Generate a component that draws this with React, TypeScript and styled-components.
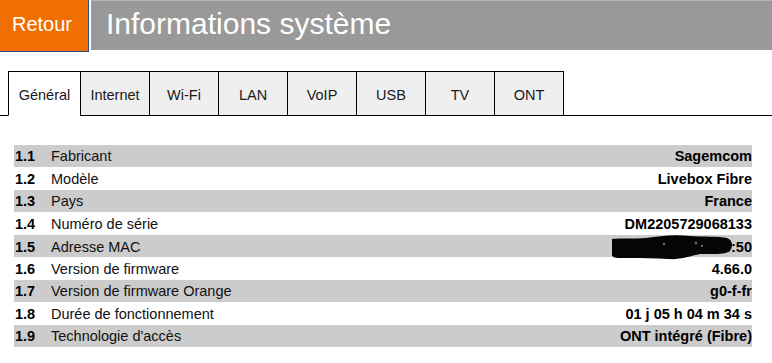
import React from "react";
import styled, { createGlobalStyle } from "styled-components";

const Global = createGlobalStyle`
  html, body { margin: 0; padding: 0; background: #ffffff; }
  body { font-family: "Liberation Sans", Arial, sans-serif; color: #000; }
`;

const Page = styled.div`
  width: 772px;
  height: 363px;
  overflow: hidden;
  display: flex;
  flex-direction: column;
`;

const Header = styled.header`
  display: flex;
  align-items: flex-start;
  gap: 2px;
  height: 52px;
`;

const BackButton = styled.button`
  width: 89px;
  height: 52px;
  box-sizing: border-box;
  background: #f16e00;
  border: none;
  border-right: 1px solid #2e4f86;
  border-bottom: 1px solid #2e4f86;
  color: #ffffff;
  font-family: "Liberation Sans", Arial, sans-serif;
  font-size: 20px;
  text-align: left;
  padding: 0 0 3px 12px;
  margin: 0;
  cursor: pointer;
`;

const TitleBar = styled.div`
  flex: 1;
  height: 50px;
  box-sizing: border-box;
  background: #999999;
  border-top: 1px solid #b4b4b4;
  display: flex;
  align-items: center;
  padding: 0 0 3px 15px;
`;

const Title = styled.h1`
  margin: 0;
  font-weight: normal;
  font-size: 30px;
  color: #ffffff;
  font-family: "Liberation Sans", Arial, sans-serif;
`;

const TabBar = styled.nav`
  display: flex;
  margin-top: 19px;
  height: 45px;
`;

const TabSpacer = styled.div<{ $grow?: boolean }>`
  width: 8px;
  flex: ${(p) => (p.$grow ? "1" : "none")};
  border-bottom: 1px solid #000;
`;

const Tab = styled.div<{ $active?: boolean; $last?: boolean; $w: number }>`
  box-sizing: border-box;
  width: ${(p) => p.$w}px;
  height: 45px;
  border-top: 1px solid #000;
  border-left: 1px solid #000;
  border-right: ${(p) => (p.$last ? "1px solid #000" : "none")};
  border-bottom: ${(p) => (p.$active ? "1px solid transparent" : "1px solid #000")};
  background: ${(p) => (p.$active ? "#ffffff" : "#efefef")};
  display: flex;
  align-items: center;
  justify-content: center;
  font-size: 14.5px;
  color: #1a1a1a;
  padding-top: 3px;
`;

const Table = styled.div`
  margin: 29px 20px 0 14px;
  display: flex;
  flex-direction: column;
`;

const Row = styled.div<{ $shaded: boolean; $h: number }>`
  display: grid;
  grid-template-columns: 37px 1fr auto;
  align-items: center;
  height: ${(p) => p.$h}px;
  background: ${(p) => (p.$shaded ? "#cccccc" : "transparent")};
  font-size: 14.5px;
`;

const Num = styled.span`
  font-weight: bold;
  padding-left: 1px;
`;

const Label = styled.span`
  color: #111;
`;

const Value = styled.span`
  font-weight: bold;
  text-align: right;
  display: flex;
  align-items: center;
  justify-content: flex-end;
`;

const Blob = styled.svg`
  display: block;
  margin-right: -9px;
  margin-top: 2px;
  overflow: visible;
`;

const Redacted = () => (
  <Blob width="128" height="22" viewBox="0 0 128 22">
    <path
      d="M0 2 C10 1 22 2 34 1 C48 -1 62 -3 78 -1 C92 0 106 -1 115 1 C121 3 121 10 118 14 C113 18 100 17 88 17 C78 19 68 23 56 22 C44 21 30 21 18 21 C8 21 1 22 0 18 Z"
      fill="#050505"
    />
    <circle cx="52" cy="7" r="1.2" fill="#777" />
    <circle cx="84" cy="6" r="1.4" fill="#666" />
    <circle cx="90" cy="9" r="1" fill="#888" />
  </Blob>
);

const tabs = ["Général", "Internet", "Wi-Fi", "LAN", "VoIP", "USB", "TV", "ONT"];

const rows: { n: string; label: string; value: React.ReactNode }[] = [
  { n: "1.1", label: "Fabricant", value: "Sagemcom" },
  { n: "1.2", label: "Modèle", value: "Livebox Fibre" },
  { n: "1.3", label: "Pays", value: "France" },
  { n: "1.4", label: "Numéro de série", value: "DM2205729068133" },
  {
    n: "1.5",
    label: "Adresse MAC",
    value: (
      <>
        <Redacted />
        <span>:50</span>
      </>
    ),
  },
  { n: "1.6", label: "Version de firmware", value: "4.66.0" },
  { n: "1.7", label: "Version de firmware Orange", value: "g0-f-fr" },
  { n: "1.8", label: "Durée de fonctionnement", value: "01 j 05 h 04 m 34 s" },
  { n: "1.9", label: "Technologie d'accès", value: "ONT intégré (Fibre)" },
];

export default function App() {
  return (
    <>
      <Global />
      <Page>
        <Header>
          <BackButton>Retour</BackButton>
          <TitleBar>
            <Title>Informations système</Title>
          </TitleBar>
        </Header>
        <TabBar>
          <TabSpacer />
          {tabs.map((t, i) => (
            <Tab
              key={t}
              $active={i === 0}
              $last={i === tabs.length - 1}
              $w={i === 0 ? 72 : i === tabs.length - 1 ? 70 : 69}
            >
              {t}
            </Tab>
          ))}
          <TabSpacer $grow />
        </TabBar>
        <Table>
          {rows.map((r, i) => (
            <Row key={r.n} $shaded={i % 2 === 0} $h={i % 2 === 0 ? 22 : 23}>
              <Num>{r.n}</Num>
              <Label>{r.label}</Label>
              <Value>{r.value}</Value>
            </Row>
          ))}
        </Table>
      </Page>
    </>
  );
}
